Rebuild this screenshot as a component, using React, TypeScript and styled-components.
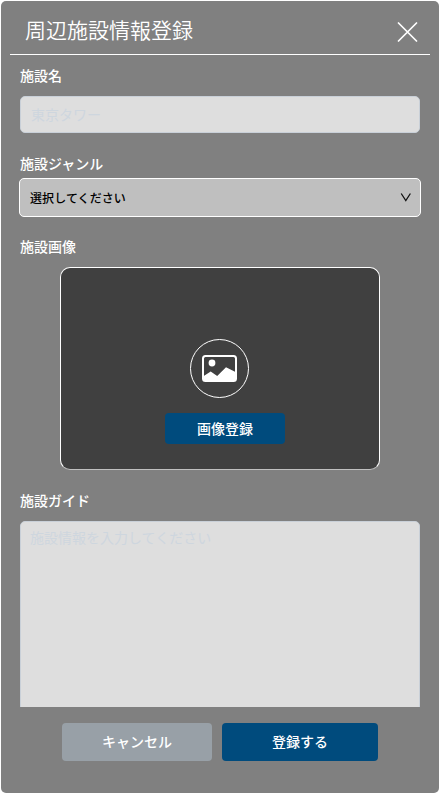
import React from 'react';
import styled, { createGlobalStyle } from 'styled-components';

const GlobalStyle = createGlobalStyle`
  * { box-sizing: border-box; }
  body { margin: 0; background: #fff; }
  body, button, input, textarea {
    font-family: "Noto Sans CJK JP", "Noto Sans", sans-serif;
  }
`;

const Panel = styled.main`
  display: flex;
  flex-direction: column;
  width: 438px;
  height: 792px;
  margin: 1px;
  padding: 0 9px;
  border-radius: 5px;
  background: #808080;
  color: #fff;
  overflow: hidden;
`;

const Header = styled.header`
  flex: none;
  display: flex;
  justify-content: space-between;
  height: 54px;
  padding: 13px 12px 0 15px;
  border-bottom: 1px solid #fff;
`;

const Title = styled.h1`
  margin: 0;
  font-size: 21px;
  font-weight: 350;
  line-height: 30px;
`;

const CloseButton = styled.button`
  width: 21px;
  height: 21px;
  margin-top: 8px;
  padding: 0;
  border: 0;
  background: none;
  color: #fff;
  svg { display: block; }
`;

const Form = styled.div`
  flex: none;
  height: 652px;
  padding: 0 10px;
  overflow: hidden;
`;

const Field = styled.section<{ $height: number; $labelHeight: number; $top?: number }>`
  display: grid;
  grid-template-rows: ${p => p.$labelHeight}px auto;
  align-content: start;
  height: ${p => p.$height}px;
  padding-top: ${p => p.$top ?? 0}px;
`;

const Label = styled.label`
  font-size: 14px;
  font-weight: 500;
  line-height: 20px;
`;

const TextInput = styled.input`
  width: 100%;
  height: 37px;
  padding: 0 10px 2px;
  border: 1px solid #c9d0d8;
  border-radius: 5px;
  background: #dedede;
  font-size: 14px;
  &::placeholder { color: #ced6de; opacity: 1; }
`;

const SelectBox = styled.button`
  display: flex;
  align-items: center;
  justify-content: space-between;
  width: 402px;
  height: 39px;
  margin: 0 -1px;
  padding: 0 9px 0 10px;
  border: 1px solid #fff;
  border-radius: 5px;
  background: #bfbfbf;
  color: #000;
  font-size: 12px;
  font-weight: 500;
  letter-spacing: 0.08px;
`;

const ImageArea = styled.div`
  display: flex;
  flex-direction: column;
  align-items: center;
  width: 320px;
  height: 203px;
  margin: 0 40px;
  padding-top: 71px;
  border: 1px solid #fff;
  border-bottom-color: #c0c0c0;
  border-radius: 10px;
  background: #404040;
`;

const ImageBadge = styled.div`
  display: grid;
  place-items: center;
  width: 59px;
  height: 59px;
  margin-right: 1px;
  border: 1px solid #fff;
  border-radius: 50%;
`;

const UploadButton = styled.button`
  width: 120px;
  height: 31px;
  margin: 15px 0 0 10px;
  padding: 0 0 2px;
  border: 0;
  border-radius: 4px;
  background: #004b7d;
  color: #fff;
  font-size: 14px;
  font-weight: 500;
`;

const GuideInput = styled.textarea`
  display: block;
  width: 100%;
  height: 240px;
  padding: 5px 9px;
  border: 1px solid #c9d0d8;
  border-radius: 5px;
  background: #dedede;
  font-size: 14px;
  line-height: 20px;
  resize: none;
  &::placeholder { color: #ced6de; opacity: 1; }
`;

const Footer = styled.footer`
  display: flex;
  gap: 10px;
  padding: 16px 52px 0;
`;

const ActionButton = styled.button<{ $primary?: boolean }>`
  width: ${p => (p.$primary ? 156 : 150)}px;
  height: 38px;
  padding: 0 0 2px;
  border: 0;
  border-radius: 4px;
  background: ${p => (p.$primary ? '#004b7d' : '#98a0a7')};
  color: #fff;
  font-size: 14px;
  font-weight: 500;
`;

const CloseIcon = () => (
  <svg width="21" height="21" viewBox="0 0 21 21" stroke="currentColor" strokeWidth="1.7" strokeLinecap="round">
    <path d="M1.5 1l18 18M19.500 1L1.500 19" />
  </svg>
);

const ChevronIcon = () => (
  <svg width="11" height="9" viewBox="0 0 11 9" fill="none" stroke="#111" strokeWidth="1.3">
    <path d="M1.200 0.500L5.800 7.500L10.400 0.500" />
  </svg>
);

const PictureIcon = () => (
  <svg width="35" height="27" viewBox="0 0 35 27">
    <rect x="1" y="1" width="33" height="25" rx="2.5" fill="none" stroke="#fff" strokeWidth="2" />
    <circle cx="10" cy="8" r="3.4" fill="#fff" />
    <path d="M1 23v-1.500L8.700 16.600l6.500 4.400L24 12.300L34 17.200V24q0 2-2 2H3q-2 0-2-2z" fill="#fff" />
  </svg>
);

export default function App() {
  return (
    <>
      <GlobalStyle />
      <Panel>
        <Header>
          <Title>周辺施設情報登録</Title>
          <CloseButton aria-label="閉じる"><CloseIcon /></CloseButton>
        </Header>
        <Form>
          <Field $height={98} $labelHeight={31} $top={10}>
            <Label htmlFor="name">施設名</Label>
            <TextInput id="name" placeholder="東京タワー" />
          </Field>
          <Field $height={83} $labelHeight={25}>
            <Label>施設ジャンル</Label>
            <SelectBox type="button">選択してください<ChevronIcon /></SelectBox>
          </Field>
          <Field $height={254} $labelHeight={31}>
            <Label>施設画像</Label>
            <ImageArea>
              <ImageBadge><PictureIcon /></ImageBadge>
              <UploadButton>画像登録</UploadButton>
            </ImageArea>
          </Field>
          <Field $height={300} $labelHeight={31}>
            <Label htmlFor="guide">施設ガイド</Label>
            <GuideInput id="guide" placeholder="施設情報を入力してください" />
          </Field>
        </Form>
        <Footer>
          <ActionButton>キャンセル</ActionButton>
          <ActionButton $primary>登録する</ActionButton>
        </Footer>
      </Panel>
    </>
  );
}
